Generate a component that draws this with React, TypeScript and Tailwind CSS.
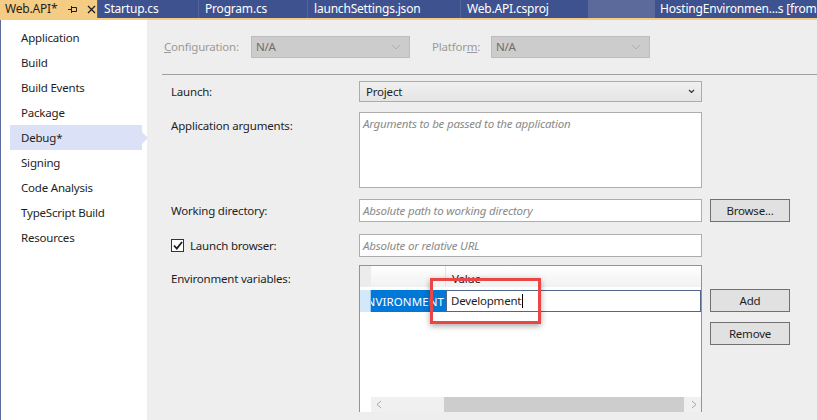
import React from "react";

const tabs = [
  { label: "Startup.cs", w: "w-[101px]" },
  { label: "Program.cs", w: "w-[109px]" },
  { label: "launchSettings.json", w: "w-[153px]" },
  { label: "Web.API.csproj", w: "w-[128px]" },
];

const pages = [
  "Application",
  "Build",
  "Build Events",
  "Package",
  "Debug*",
  "Signing",
  "Code Analysis",
  "TypeScript Build",
  "Resources",
];

function Chevron({ className }: { className?: string }) {
  return (
    <svg width="10" height="6" viewBox="0 0 10 6" className={className}>
      <path d="M1 1 L5 5 L9 1" fill="none" stroke="currentColor" strokeWidth="1" />
    </svg>
  );
}

function TabBar() {
  return (
    <div className="flex shrink-0 flex-col">
      <div className="flex h-[18px] bg-[#3f5290] text-[12px] leading-[18px]">
        <div className="flex w-[97px] shrink-0 items-center bg-[#f5cc84] pl-[5px] text-[#1e1e1e]">
          <span>Web.API*</span>
          {/* pin */}
          <svg width="10" height="9" viewBox="0 0 10 9" className="ml-[11px]">
            <path d="M0 4.5 H3 M3.5 1 V8 M3.5 2.5 H8.5 V6.5 H3.5" fill="none" stroke="#1e1e1e" strokeWidth="1" />
          </svg>
          <svg width="9" height="9" viewBox="0 0 9 9" className="ml-[9px]">
            <path d="M1 1 L8 8 M8 1 L1 8" stroke="#1e1e1e" strokeWidth="1.3" />
          </svg>
        </div>
        {tabs.map((t) => (
          <div key={t.label} className={`${t.w} shrink-0 border-l border-[#55659c] pl-[6px] text-white`}>
            {t.label}
          </div>
        ))}
        <div className="w-[67px] shrink-0 bg-[#5b6a9b]" />
        <div className="flex-1 overflow-hidden whitespace-nowrap pl-[5px] text-white">HostingEnvironmen...s [from</div>
      </div>
      <div className="h-[2px] bg-[#f5cc84]" />
    </div>
  );
}

function Sidebar() {
  return (
    <div className="w-[147px] shrink-0 border-l border-[#5b6a9b] bg-white pt-[5px]">
      {pages.map((p) =>
        p === "Debug*" ? (
          <div key={p} className="relative ml-[9px] flex h-[25px] w-[132px] items-center bg-[#dbe2f7] pl-[11px]">
            {p}
            <span className="absolute right-[-6px] top-[7px] h-0 w-0 border-y-[6px] border-l-[6px] border-y-transparent border-l-[#dbe2f7]" />
          </div>
        ) : (
          <div key={p} className="flex h-[25px] items-center pl-[20px]">
            {p}
          </div>
        )
      )}
    </div>
  );
}

function Button({ children }: { children: React.ReactNode }) {
  return (
    <div className="flex h-[23px] w-[80px] items-center justify-center border border-[#707070] bg-[#e1e1e1] text-[#1e1e1e]">
      {children}
    </div>
  );
}

function Field({ placeholder, h = "h-[23px]" }: { placeholder: string; h?: string }) {
  return (
    <div className={`${h} w-[343px] border border-[#adadad] bg-white pl-[3px] pt-[2px] italic text-[#8a8a8a]`}>
      {placeholder}
    </div>
  );
}

function EnvGrid() {
  return (
    <div className="relative flex h-[147px] w-[343px] flex-col border border-b-0 border-[#7f96b6] bg-white">
      <div className="flex h-[21px]">
        <div className="w-[11px] shrink-0 bg-[#ececec]" />
        <div className="w-[75px] shrink-0 border-r border-[#e3e3e3] bg-gradient-to-b from-white to-[#f1f1f1]" />
        <div className="flex-1 bg-gradient-to-b from-white to-[#f1f1f1] pl-[6px] pt-[4px] text-[#1e1e1e]">Value</div>
      </div>
      <div className="mt-[3px] flex h-[22px]">
        <div className="relative z-10 w-[11px] shrink-0 border-r border-[#99c9ef] bg-[#d3e9fa]" />
        <div className="relative flex w-[75px] min-w-0 shrink-0 justify-end overflow-hidden whitespace-nowrap bg-[#0078d7] pr-[2px] pt-[3px] text-white">
          <span className="tracking-[0.1px]">ASPNETCORE_ENVIRONMENT</span>
        </div>
        <div className="flex min-w-0 flex-1 items-center border border-[#4f6889] bg-white pl-[4px] text-[#1e1e1e]">
          Development<span className="ml-[1px] h-[14px] w-[1px] bg-black" />
        </div>
      </div>
      <div className="flex-1" />
      <div className="flex h-[15px]">
        <div className="w-[11px] shrink-0" />
        <div className="flex flex-1 items-center bg-[#f0f0f0]">
          <svg width="6" height="9" viewBox="0 0 6 9" className="ml-[5px] text-[#a6a6a6]">
            <path d="M5 1 L1 4.5 L5 8" fill="none" stroke="currentColor" />
          </svg>
          <div className="ml-[62px] h-[15px] w-[240px] bg-[#cdcdcd]" />
          <svg width="6" height="9" viewBox="0 0 6 9" className="ml-[7px] text-[#a6a6a6]">
            <path d="M1 1 L5 4.5 L1 8" fill="none" stroke="currentColor" />
          </svg>
        </div>
      </div>
      <div className="pointer-events-none absolute left-[70px] top-[12px] z-20 h-[46px] w-[111px] border-[3px] border-[#ea4646] shadow-[0_2px_6px_rgba(0,0,0,0.35)]" />
    </div>
  );
}

function Main() {
  return (
    <div className="flex flex-1 flex-col bg-[#eeeeee] pt-[16px] text-[#1e1e1e]">
      <div className="flex h-[22px] items-center pl-[17px] text-[#9a9a9a]">
        <span className="w-[87px]">
          <span className="underline">C</span>onfiguration:
        </span>
        <div className="flex h-[22px] w-[159px] items-center justify-between border border-[#bcbcbc] bg-[#cccccc] pl-[4px] pr-[8px] text-[#6d6d6d]">
          N/A
          <Chevron className="text-[#b0b0b0]" />
        </div>
        <span className="ml-[22px] w-[59px]">
          Platfor<span className="underline">m</span>:
        </span>
        <div className="flex h-[22px] w-[159px] items-center justify-between border border-[#bcbcbc] bg-[#cccccc] pl-[4px] pr-[8px] text-[#6d6d6d]">
          N/A
          <Chevron className="text-[#b0b0b0]" />
        </div>
      </div>
      <div className="ml-[15px] mt-[16px] h-[1px] bg-[#a0a0a0]" />

      <div className="ml-[24px] mt-[6px] grid grid-cols-[188px_343px_8px_80px]">
        <div className="flex h-[21px] items-center">Launch:</div>
        <div className="flex h-[21px] items-center justify-between border border-[#acacac] bg-gradient-to-b from-[#f0f0f0] to-[#e5e5e5] px-[6px]">
          Project
          <svg width="7" height="5" viewBox="0 0 7 5">
            <path d="M1 1 L3.5 3.5 L6 1" fill="none" stroke="#333" strokeWidth="1.2" />
          </svg>
        </div>
        <div />
        <div />

        <div className="mt-[10px] pt-[5px]">Application arguments:</div>
        <div className="mt-[10px]">
          <Field placeholder="Arguments to be passed to the application" h="h-[76px]" />
        </div>
        <div />
        <div />

        <div className="mt-[11px] flex h-[23px] items-center">Working directory:</div>
        <div className="mt-[11px]">
          <Field placeholder="Absolute path to working directory" />
        </div>
        <div />
        <div className="mt-[11px]">
          <Button>Browse...</Button>
        </div>

        <div className="mt-[12px] flex h-[23px] items-center">
          <div className="flex h-[13px] w-[13px] items-center justify-center border border-[#333333] bg-white">
            <svg width="10" height="9" viewBox="0 0 10 9">
              <path d="M1 4.5 L3.8 7.5 L9 1" fill="none" stroke="#1e1e1e" strokeWidth="1.8" />
            </svg>
          </div>
          <span className="ml-[6px]">Launch browser:</span>
        </div>
        <div className="mt-[12px]">
          <Field placeholder="Absolute or relative URL" />
        </div>
        <div />
        <div />

        <div className="mt-[8px] pt-[5px]">Environment variables:</div>
        <div className="mt-[8px]">
          <EnvGrid />
        </div>
        <div />
        <div className="mt-[8px] flex flex-col gap-[10px] pt-[24px]">
          <Button>Add</Button>
          <Button>Remove</Button>
        </div>
      </div>
    </div>
  );
}

export default function App() {
  return (
    <div className="flex h-[420px] w-[817px] flex-col overflow-hidden bg-[#eeeeee] font-['Noto_Sans',sans-serif] text-[11.5px] tracking-[-0.2px] text-[#1e1e1e]">
      <TabBar />
      <div className="flex flex-1">
        <Sidebar />
        <Main />
      </div>
    </div>
  );
}
